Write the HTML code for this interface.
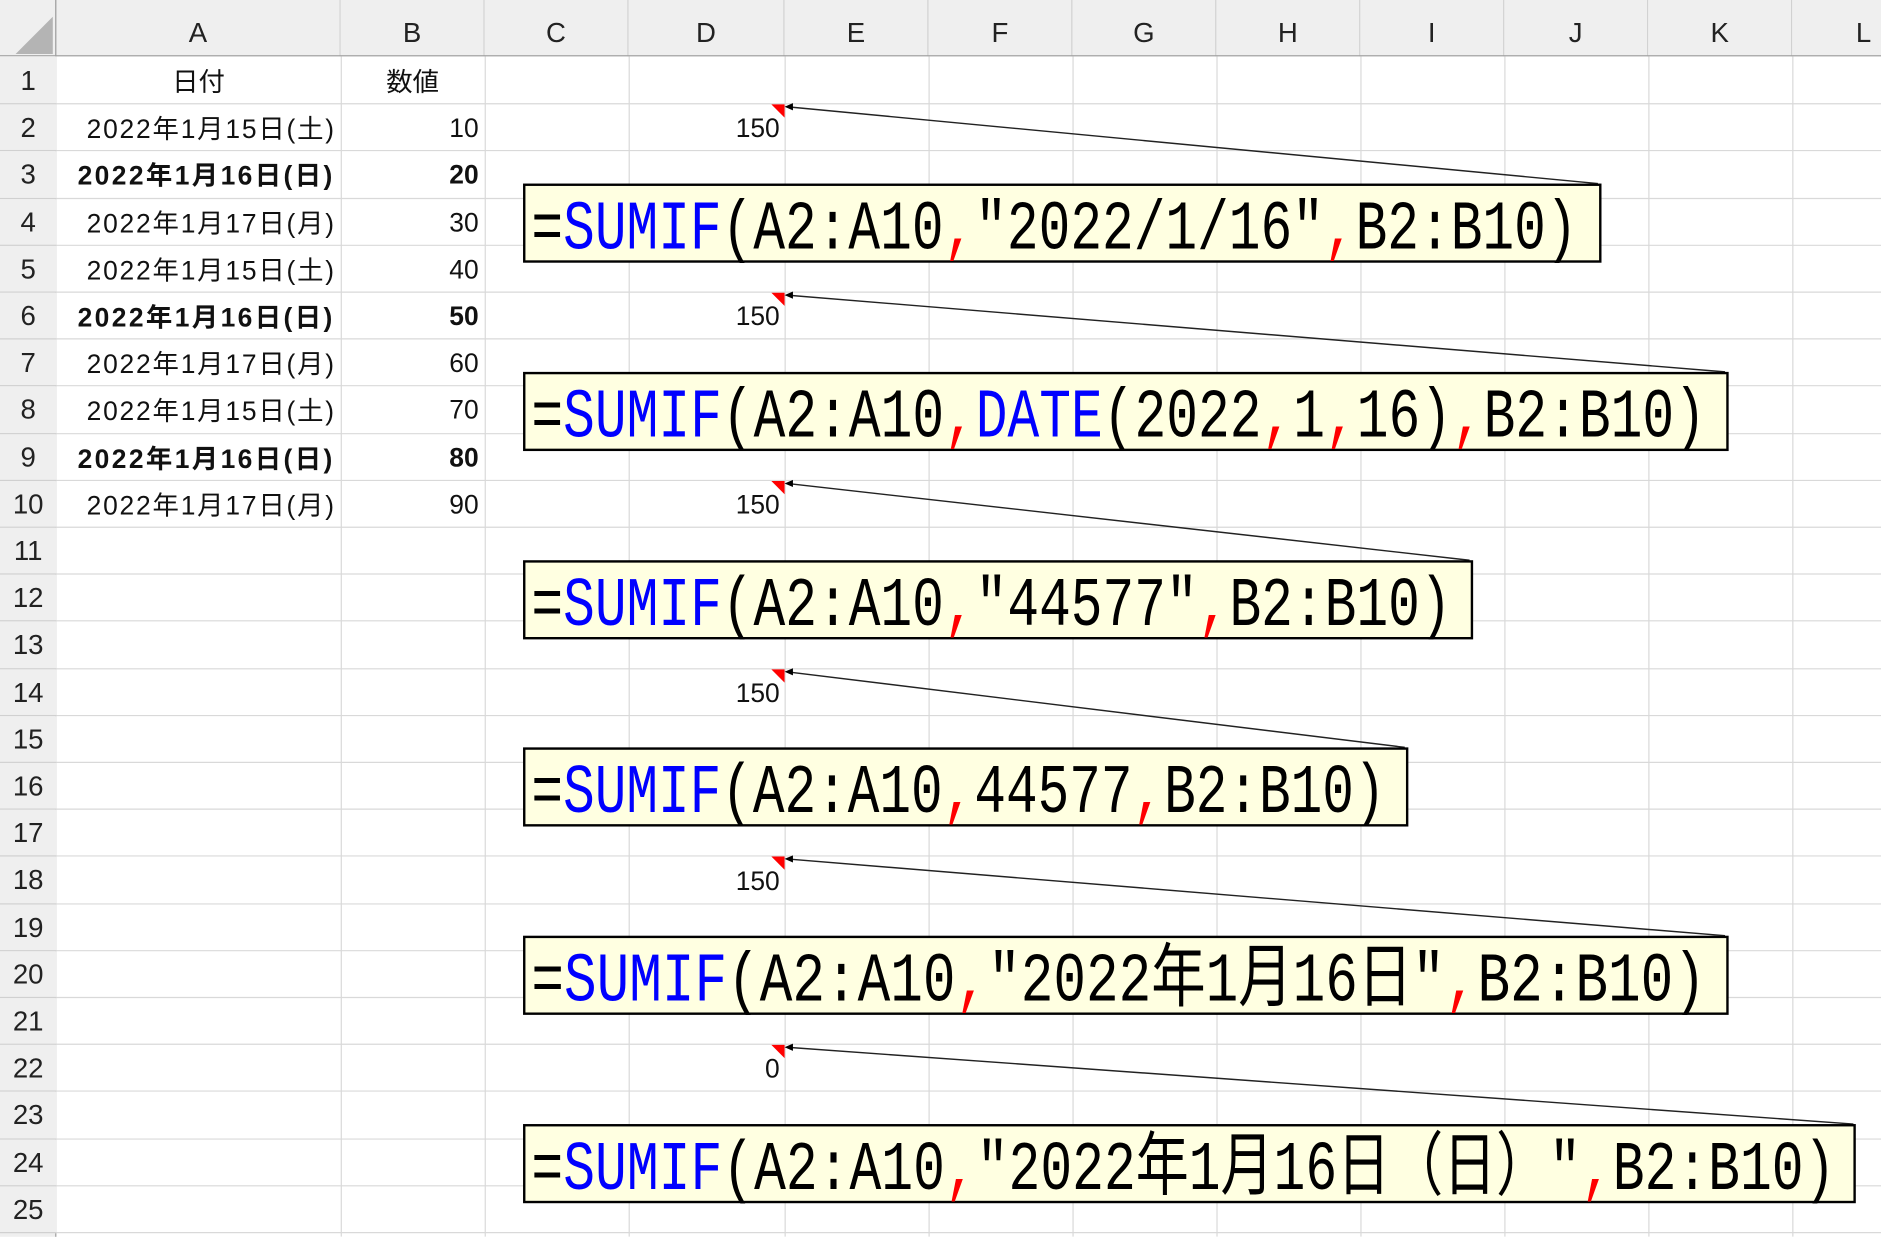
<!DOCTYPE html>
<html><head><meta charset="utf-8">
<style>
html,body{margin:0;padding:0;background:#fff;overflow:hidden;width:1881px;height:1237px}
#w{position:absolute;left:0;top:0;width:1568px;height:1031px;transform:scale(1.19962);transform-origin:0 0;font-family:"Liberation Sans","Noto Sans CJK JP",sans-serif;}
.ch{position:absolute;top:0;height:47px;background:#efefef;border-right:1px solid #d0d0d0;box-sizing:border-box;text-align:center;line-height:54px;font-size:23px;color:#222}
.rh{position:absolute;left:0;width:47px;background:#efefef;border-bottom:1px solid #d0d0d0;box-sizing:border-box;text-align:center;font-size:23px;color:#222}
.c{position:absolute;font-size:22px;color:#111;white-space:nowrap}
.d{letter-spacing:1.5px}
.db{letter-spacing:2px;font-weight:bold}
.n{margin-top:3px}
</style></head><body>
<div id="w">
<svg width="1568" height="1031" style="position:absolute;left:0;top:0">
<g stroke="#d9d9d9" stroke-width="1">
<line x1="284.5" y1="47" x2="284.5" y2="1031"/><line x1="404.5" y1="47" x2="404.5" y2="1031"/>
<line x1="524.5" y1="47" x2="524.5" y2="1031"/><line x1="654.5" y1="47" x2="654.5" y2="1031"/>
<line x1="774.5" y1="47" x2="774.5" y2="1031"/><line x1="894.5" y1="47" x2="894.5" y2="1031"/>
<line x1="1014.5" y1="47" x2="1014.5" y2="1031"/><line x1="1134.5" y1="47" x2="1134.5" y2="1031"/>
<line x1="1254.5" y1="47" x2="1254.5" y2="1031"/><line x1="1374.5" y1="47" x2="1374.5" y2="1031"/>
<line x1="1494.5" y1="47" x2="1494.5" y2="1031"/>
</g>
<g stroke="#d9d9d9">
<line x1="47" y1="86.5" x2="1568" y2="86.5"/><line x1="47" y1="125.5" x2="1568" y2="125.5"/><line x1="47" y1="165.5" x2="1568" y2="165.5"/><line x1="47" y1="204.5" x2="1568" y2="204.5"/><line x1="47" y1="243.5" x2="1568" y2="243.5"/><line x1="47" y1="282.5" x2="1568" y2="282.5"/><line x1="47" y1="321.5" x2="1568" y2="321.5"/><line x1="47" y1="361.5" x2="1568" y2="361.5"/><line x1="47" y1="400.5" x2="1568" y2="400.5"/><line x1="47" y1="439.5" x2="1568" y2="439.5"/><line x1="47" y1="478.5" x2="1568" y2="478.5"/><line x1="47" y1="517.5" x2="1568" y2="517.5"/><line x1="47" y1="557.5" x2="1568" y2="557.5"/><line x1="47" y1="596.5" x2="1568" y2="596.5"/><line x1="47" y1="635.5" x2="1568" y2="635.5"/><line x1="47" y1="674.5" x2="1568" y2="674.5"/><line x1="47" y1="713.5" x2="1568" y2="713.5"/><line x1="47" y1="753.5" x2="1568" y2="753.5"/><line x1="47" y1="792.5" x2="1568" y2="792.5"/><line x1="47" y1="831.5" x2="1568" y2="831.5"/><line x1="47" y1="870.5" x2="1568" y2="870.5"/><line x1="47" y1="909.5" x2="1568" y2="909.5"/><line x1="47" y1="949.5" x2="1568" y2="949.5"/><line x1="47" y1="988.5" x2="1568" y2="988.5"/><line x1="47" y1="1027.5" x2="1568" y2="1027.5"/>
</g>
</svg>
<div class="ch" style="left:0;width:47px"></div>
<svg style="position:absolute;left:10px;top:12px" width="36" height="34"><polygon points="34,2 34,33 3,33" fill="#b4b4b4"/></svg>
<div class="ch" style="left:47px;width:237px">A</div>
<div class="ch" style="left:284px;width:120px">B</div>
<div class="ch" style="left:404px;width:120px">C</div>
<div class="ch" style="left:524px;width:130px">D</div>
<div class="ch" style="left:654px;width:120px">E</div>
<div class="ch" style="left:774px;width:120px">F</div>
<div class="ch" style="left:894px;width:120px">G</div>
<div class="ch" style="left:1014px;width:120px">H</div>
<div class="ch" style="left:1134px;width:120px">I</div>
<div class="ch" style="left:1254px;width:120px">J</div>
<div class="ch" style="left:1374px;width:120px">K</div>
<div class="ch" style="left:1494px;width:120px">L</div>
<div style="position:absolute;left:0;top:46px;width:1568px;height:1px;background:#a0a0a0"></div>
<div style="position:absolute;left:0;top:47px;width:47px;height:984px;background:#efefef"></div>
<div style="position:absolute;left:46px;top:0;width:1px;height:1031px;background:#a0a0a0"></div>
<div class="rh" style="top:47px;height:40px;line-height:40px">1</div>
<div class="rh" style="top:87px;height:39px;line-height:38px">2</div>
<div class="rh" style="top:126px;height:40px;line-height:38px">3</div>
<div class="rh" style="top:166px;height:39px;line-height:38px">4</div>
<div class="rh" style="top:205px;height:39px;line-height:38px">5</div>
<div class="rh" style="top:244px;height:39px;line-height:38px">6</div>
<div class="rh" style="top:283px;height:39px;line-height:38px">7</div>
<div class="rh" style="top:322px;height:40px;line-height:38px">8</div>
<div class="rh" style="top:362px;height:39px;line-height:38px">9</div>
<div class="rh" style="top:401px;height:39px;line-height:38px">10</div>
<div class="rh" style="top:440px;height:39px;line-height:38px">11</div>
<div class="rh" style="top:479px;height:39px;line-height:38px">12</div>
<div class="rh" style="top:518px;height:40px;line-height:38px">13</div>
<div class="rh" style="top:558px;height:39px;line-height:38px">14</div>
<div class="rh" style="top:597px;height:39px;line-height:38px">15</div>
<div class="rh" style="top:636px;height:39px;line-height:38px">16</div>
<div class="rh" style="top:675px;height:39px;line-height:38px">17</div>
<div class="rh" style="top:714px;height:40px;line-height:38px">18</div>
<div class="rh" style="top:754px;height:39px;line-height:38px">19</div>
<div class="rh" style="top:793px;height:39px;line-height:38px">20</div>
<div class="rh" style="top:832px;height:39px;line-height:38px">21</div>
<div class="rh" style="top:871px;height:39px;line-height:38px">22</div>
<div class="rh" style="top:910px;height:40px;line-height:38px">23</div>
<div class="rh" style="top:950px;height:39px;line-height:38px">24</div>
<div class="rh" style="top:989px;height:39px;line-height:38px">25</div>
<div class="c" style="left:47px;width:237px;text-align:center;top:51px">日付</div>
<div class="c" style="left:284px;width:120px;text-align:center;top:51px">数値</div>
<div class="c d" style="right:1288px;top:90px">2022年1月15日(土)</div>
<div class="c db" style="right:1289px;top:129px">2022年1月16日(日)</div>
<div class="c d" style="right:1288px;top:169px">2022年1月17日(月)</div>
<div class="c d" style="right:1288px;top:208px">2022年1月15日(土)</div>
<div class="c db" style="right:1289px;top:247px">2022年1月16日(日)</div>
<div class="c d" style="right:1288px;top:286px">2022年1月17日(月)</div>
<div class="c d" style="right:1288px;top:325px">2022年1月15日(土)</div>
<div class="c db" style="right:1289px;top:365px">2022年1月16日(日)</div>
<div class="c d" style="right:1288px;top:404px">2022年1月17日(月)</div>
<div class="c n" style="right:1169px;top:91px">10</div>
<div class="c n" style="right:1169px;top:130px;font-weight:bold">20</div>
<div class="c n" style="right:1169px;top:170px">30</div>
<div class="c n" style="right:1169px;top:209px">40</div>
<div class="c n" style="right:1169px;top:248px;font-weight:bold">50</div>
<div class="c n" style="right:1169px;top:287px">60</div>
<div class="c n" style="right:1169px;top:326px">70</div>
<div class="c n" style="right:1169px;top:366px;font-weight:bold">80</div>
<div class="c n" style="right:1169px;top:405px">90</div>
<div class="c n" style="right:918px;top:91px">150</div>
<div class="c n" style="right:918px;top:248px">150</div>
<div class="c n" style="right:918px;top:405px">150</div>
<div class="c n" style="right:918px;top:562px">150</div>
<div class="c n" style="right:918px;top:719px">150</div>
<div class="c n" style="right:918px;top:875px">0</div>
<svg width="1568" height="1031" style="position:absolute;left:0;top:0" font-family="Liberation Mono, Noto Sans CJK JP, monospace" font-size="58">
<g fill="#ff0000">
<polygon points="643,87 654,87 654,98"/><polygon points="643,244 654,244 654,255"/><polygon points="643,401 654,401 654,412"/>
<polygon points="643,558 654,558 654,569"/><polygon points="643,714 654,714 654,725"/><polygon points="643,871 654,871 654,882"/>
</g>
<g stroke="#222" stroke-width="1.2" fill="none">
<line x1="656" y1="89" x2="1332" y2="153"/><line x1="656" y1="246" x2="1438" y2="310"/>
<line x1="656" y1="403" x2="1225" y2="467"/><line x1="656" y1="560" x2="1171" y2="623"/>
<line x1="656" y1="716" x2="1438" y2="780"/><line x1="656" y1="873" x2="1545" y2="937"/>
</g>
<g fill="#000">
<polygon points="654,89 661,86 661,92"/><polygon points="654,246 661,243 661,249"/><polygon points="654,403 661,400 661,406"/>
<polygon points="654,560 661,557 661,563"/><polygon points="654,716 661,713 661,719"/><polygon points="654,873 661,870 661,876"/>
</g>
<g fill="#ffffe1" stroke="#000" stroke-width="2">
<rect x="437" y="154" width="897" height="64"/>
<rect x="437" y="311" width="1003" height="64"/>
<rect x="437" y="468" width="790" height="64"/>
<rect x="437" y="624" width="736" height="64"/>
<rect x="437" y="781" width="1003" height="64"/>
<rect x="437" y="938" width="1109" height="64"/>
</g>
<text x="443" y="207" textLength="872" lengthAdjust="spacingAndGlyphs">=<tspan fill="#0000ff">SUMIF</tspan>(A2:A10<tspan fill="#ff0000">,</tspan>"2022/1/16"<tspan fill="#ff0000">,</tspan>B2:B10)</text>
<text x="443" y="364" textLength="979" lengthAdjust="spacingAndGlyphs">=<tspan fill="#0000ff">SUMIF</tspan>(A2:A10<tspan fill="#ff0000">,</tspan><tspan fill="#0000ff">DATE</tspan>(2022<tspan fill="#ff0000">,</tspan>1<tspan fill="#ff0000">,</tspan>16)<tspan fill="#ff0000">,</tspan>B2:B10)</text>
<text x="443" y="521" textLength="767" lengthAdjust="spacingAndGlyphs">=<tspan fill="#0000ff">SUMIF</tspan>(A2:A10<tspan fill="#ff0000">,</tspan>"44577"<tspan fill="#ff0000">,</tspan>B2:B10)</text>
<text x="443" y="677" textLength="712" lengthAdjust="spacingAndGlyphs">=<tspan fill="#0000ff">SUMIF</tspan>(A2:A10<tspan fill="#ff0000">,</tspan>44577<tspan fill="#ff0000">,</tspan>B2:B10)</text>
<text x="443" y="834" textLength="979" lengthAdjust="spacingAndGlyphs">=<tspan fill="#0000ff">SUMIF</tspan>(A2:A10<tspan fill="#ff0000">,</tspan>"2022年1月16日"<tspan fill="#ff0000">,</tspan>B2:B10)</text>
<text x="443" y="991" textLength="1087" lengthAdjust="spacingAndGlyphs">=<tspan fill="#0000ff">SUMIF</tspan>(A2:A10<tspan fill="#ff0000">,</tspan>"2022年1月16日（日）"<tspan fill="#ff0000">,</tspan>B2:B10)</text>
</svg>
</div>
</body></html>
